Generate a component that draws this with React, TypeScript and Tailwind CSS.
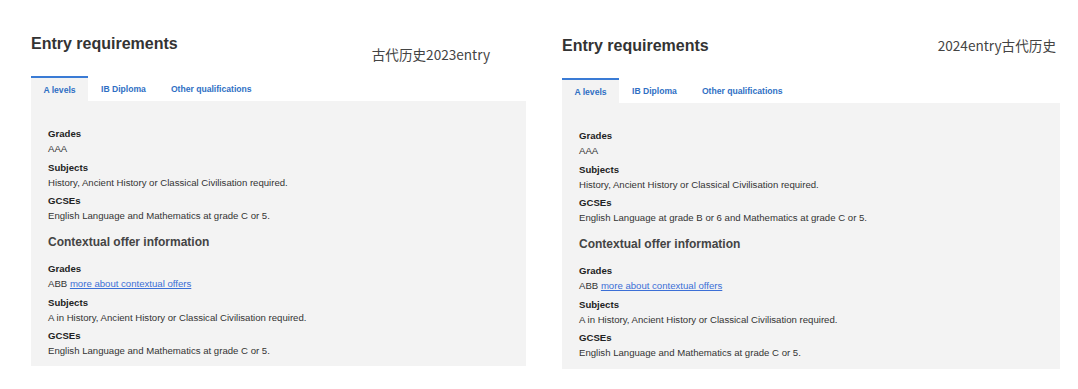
import React from "react";

type Props = {
  tag: string;
  tagClass: string;
  headClass: string;
  tabsClass: string;
  width: string;
  gcse: string;
  panelClass: string;
};

function Group({ label, children, last }: { label: string; children: React.ReactNode; last?: boolean }) {
  return (
    <div className={last ? "" : "mb-[3.5px]"}>
      <div className="text-[9.6px] leading-[15px] font-bold text-[#222]">{label}</div>
      <div className="text-[9.6px] leading-[15px] text-[#333]">{children}</div>
    </div>
  );
}

function Card({ tag, tagClass, headClass, tabsClass, width, gcse, panelClass }: Props) {
  return (
    <div className={`flex flex-col ${width}`}>
      <div className={headClass}>
        <div className="flex justify-between items-start h-[20px]">
          <h2 className="text-[16px] leading-[20px] font-bold text-[#333]">Entry requirements</h2>
          <div
            className={`text-[13.6px] leading-[20px] text-[#444] ${tagClass}`}
            style={{ fontFamily: '"Noto Sans CJK SC", "Noto Sans", sans-serif' }}
          >
            {tag}
          </div>
        </div>
      </div>
      <div className={`flex items-end ${tabsClass}`}>
        <div className="w-[57px] h-[25px] border-t-2 border-[#3a7bd5] bg-[#f3f3f3] flex items-center justify-center pt-[2px] text-[8.6px] font-bold text-[#2f6fc4]">
          A levels
        </div>
        <div className="h-[23px] pl-[13px] pr-[12px] flex items-center text-[8.6px] font-bold text-[#2f6fc4]">IB Diploma</div>
        <div className="h-[23px] pl-[13px] flex items-center text-[8.6px] font-bold text-[#2f6fc4]">
          Other qualifications
        </div>
      </div>
      <div className={`bg-[#f3f3f3] px-[17px] pt-[25px] ${panelClass}`}>
        <Group label="Grades">AAA</Group>
        <Group label="Subjects">History, Ancient History or Classical Civilisation required.</Group>
        <Group label="GCSEs" last>
          {gcse}
        </Group>
        <div className="mt-[10px] mb-[10px] text-[12px] leading-[18px] font-bold text-[#444]">
          Contextual offer information
        </div>
        <Group label="Grades">
          ABB <span className="text-[#3b6fd6] underline">more about contextual offers</span>
        </Group>
        <Group label="Subjects">A in History, Ancient History or Classical Civilisation required.</Group>
        <Group label="GCSEs" last>
          English Language and Mathematics at grade C or 5.
        </Group>
      </div>
    </div>
  );
}

export default function App() {
  return (
    <div
      className="w-[1078px] h-[389px] bg-white flex gap-[36px] pl-[31px]"
      style={{ fontFamily: '"Liberation Sans", Arial, sans-serif' }}
    >
      <Card
        tag="古代历史2023entry"
        tagClass="mt-[10px] mr-[36px]"
        headClass="pt-[34px]"
        tabsClass="mt-[22px]"
        width="w-[495px]"
        gcse="English Language and Mathematics at grade C or 5."
        panelClass="pb-[8px]"
      />
      <Card
        tag="2024entry古代历史"
        tagClass="mt-[-1px] mr-[4px]"
        headClass="pt-[36px]"
        tabsClass="mt-[22px]"
        width="w-[498px]"
        gcse="English Language at grade B or 6 and Mathematics at grade C or 5."
        panelClass="pb-[9px]"
      />
    </div>
  );
}
